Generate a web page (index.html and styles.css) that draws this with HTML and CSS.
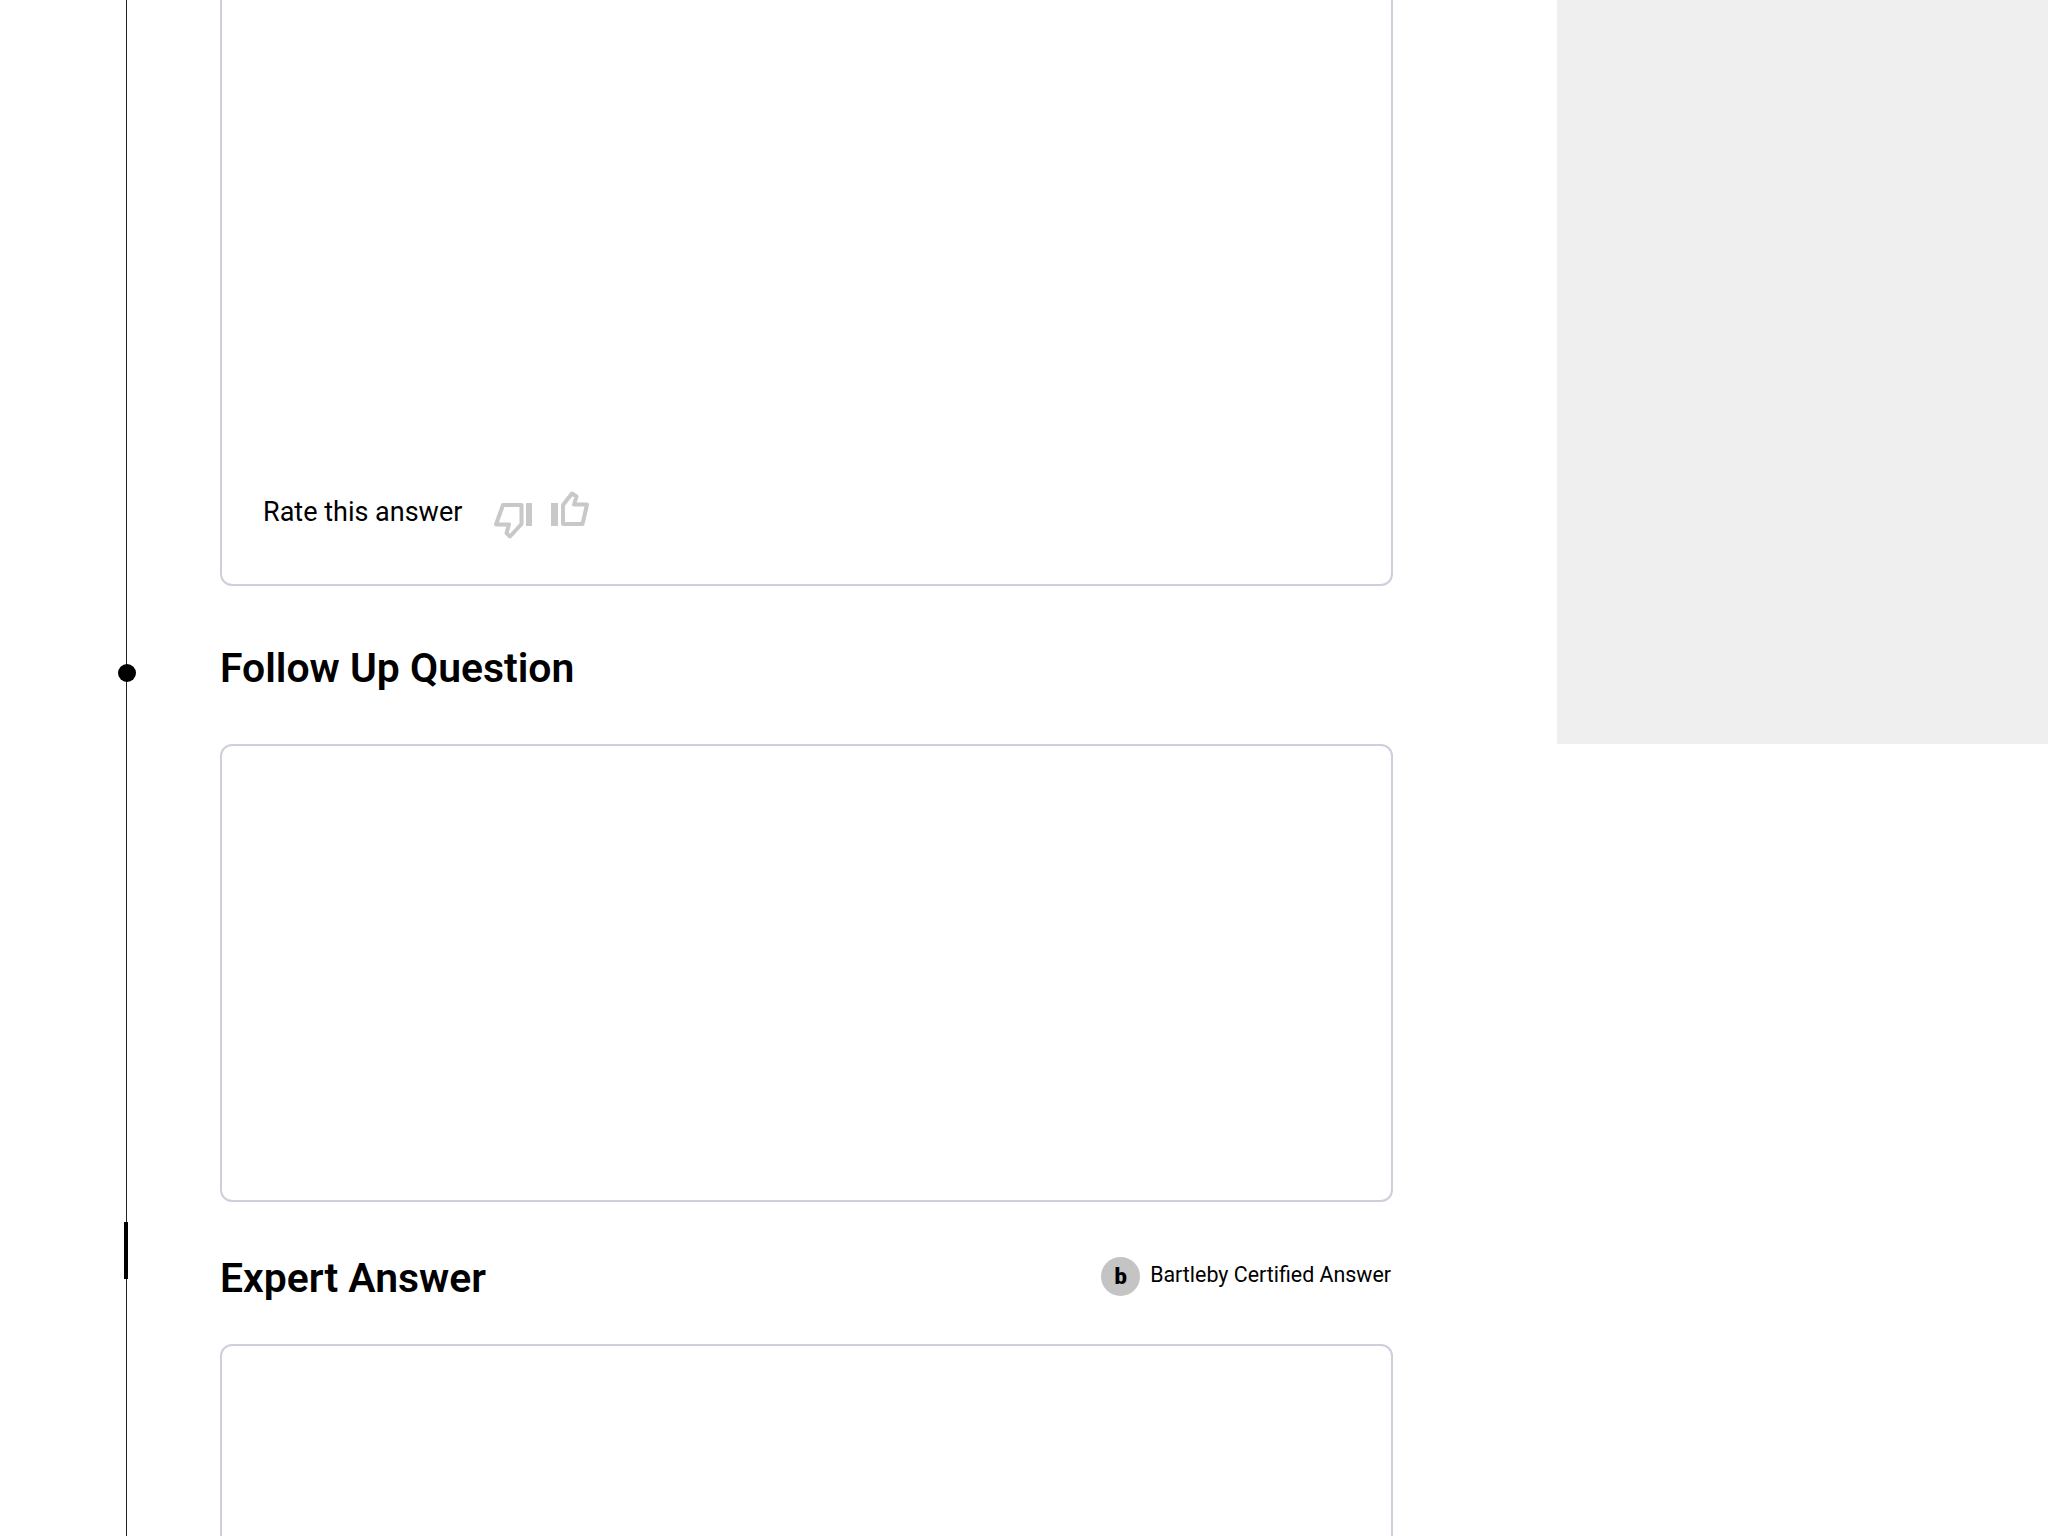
FILE: index.html
```html
<!DOCTYPE html>
<html lang="en">
<head>
<meta charset="utf-8">
<title>Expert Answer</title>
<link rel="stylesheet" href="styles.css">
</head>
<body>
<div class="page">
  <div class="timeline">
    <span class="dot"></span>
    <span class="tick"></span>
  </div>
  <main class="content">
    <section class="card card-answer">
      <div class="rate">
        <span class="rate-label">Rate this answer</span>
        <svg class="thumb-down" width="39" height="36" viewBox="0 0 39 36" aria-hidden="true">
          <rect class="bar" x="32" y="0" width="6" height="23"/>
          <path class="hand" d="M9 2H27.5V21L16 33.5L12.5 30L15 21.5H2Z"/>
        </svg>
        <svg class="thumb-up" width="38" height="36" viewBox="0 0 38 36" aria-hidden="true">
          <rect class="bar" x="0" y="12" width="7" height="23"/>
          <path class="hand" d="M12 33V14L21 2.5L25.5 5.5L23 13.5H36L31.5 33Z"/>
        </svg>
      </div>
    </section>
    <header class="section-head head-follow">
      <h2>Follow Up Question</h2>
    </header>
    <section class="card card-follow"></section>
    <header class="section-head head-expert">
      <h2>Expert Answer</h2>
      <div class="certified">
        <span class="badge">b</span>
        <span class="certified-label">Bartleby Certified Answer</span>
      </div>
    </header>
    <section class="card card-expert"></section>
  </main>
  <aside class="ad"></aside>
</div>
</body>
</html>
```
FILE: styles.css
```css
html, body {
  margin: 0;
  padding: 0;
  background: #fff;
}

.page {
  display: flex;
  align-items: flex-start;
  height: 1536px;
  overflow: hidden;
  font-family: Roboto, "Liberation Sans", sans-serif;
  color: #000;
}

.timeline {
  position: relative;
  flex: none;
  width: 1px;
  height: 1536px;
  margin-left: 126px;
  background: #222;
}

.dot {
  position: absolute;
  left: -8px;
  top: 664px;
  width: 18px;
  height: 18px;
  border-radius: 50%;
  background: #000;
}

.tick {
  position: absolute;
  left: -2px;
  top: 1222px;
  width: 4px;
  height: 57px;
  background: #000;
}

.content {
  flex: none;
  width: 1173px;
  margin-left: 93px;
}

.card {
  box-sizing: border-box;
  border: 2px solid #cdcfdd;
  border-radius: 12px;
  background: #fff;
}

.card-answer {
  display: flex;
  align-items: flex-end;
  height: 606px;
  margin-top: -20px;
  padding: 0 0 45px 41px;
}

.card-follow {
  height: 458px;
}

.card-expert {
  height: 300px;
}

.rate {
  display: flex;
  align-items: flex-start;
}

.rate-label {
  font-size: 27px;
  line-height: 36px;
  margin-right: 32px;
}

.thumb-down {
  margin-top: 9px;
  margin-right: 18px;
}

.thumb-up {
  margin-top: -3px;
}

.bar {
  fill: #c8c8c8;
}

.hand {
  fill: none;
  stroke: #c8c8c8;
  stroke-width: 4;
  stroke-linejoin: round;
}

.section-head {
  display: flex;
  justify-content: space-between;
  align-items: center;
  box-sizing: border-box;
}

.section-head h2 {
  margin: 0;
  font-size: 40.9px;
  line-height: 48px;
  font-weight: 600;
}

.head-follow {
  height: 158px;
  padding-top: 5px;
}

.head-expert {
  height: 142px;
  padding-top: 9px;
}

.certified {
  display: flex;
  align-items: center;
  padding-right: 2px;
  margin-top: -2px;
}

.badge {
  display: flex;
  align-items: center;
  justify-content: center;
  width: 39px;
  height: 39px;
  margin-right: 10px;
  border-radius: 50%;
  background: #c4c4c4;
  font-size: 22px;
  font-weight: 900;
}

.certified-label {
  font-size: 21.4px;
  line-height: 30px;
  margin-top: -3px;
}

.ad {
  flex: none;
  width: 491px;
  height: 744px;
  margin-left: 164px;
  background: #efefef;
}
```
